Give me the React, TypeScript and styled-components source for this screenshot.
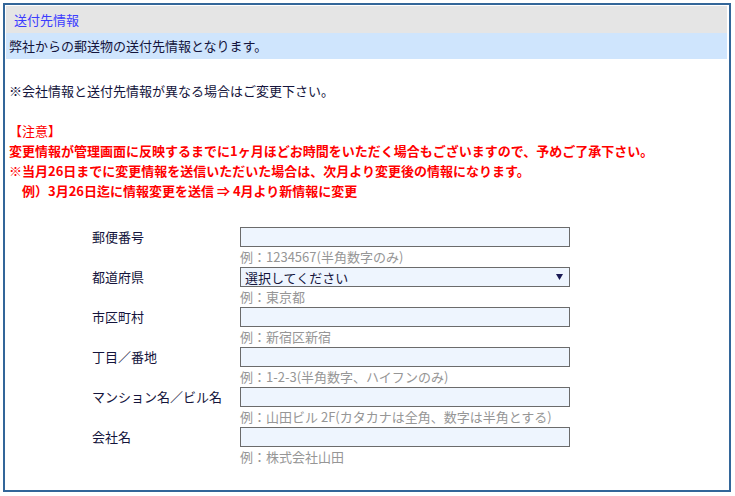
import React from "react";
import styled, { createGlobalStyle } from "styled-components";

const Global = createGlobalStyle`
  html, body { margin: 0; padding: 0; background: #ffffff; }
  body {
    padding: 3px;
    font-family: "Noto Sans CJK JP", "Noto Sans", sans-serif;
    font-size: 13px;
  }
  * { box-sizing: border-box; }
`;

const Panel = styled.section`
  width: 728px;
  border: 2px solid #336699;
  padding: 1px 2px 23px 1px;
  background: #ffffff;
`;

const Title = styled.h2`
  margin: 0;
  height: 27px;
  padding-left: 8px;
  background: #e5e5e5;
  color: #3c3cff;
  font-size: 13px;
  font-weight: normal;
  line-height: 27px;
`;

const Lead = styled.p`
  margin: 0;
  height: 26px;
  padding-left: 3px;
  background: #cfe5fd;
  color: #14143c;
  font-size: 13px;
  line-height: 26px;
`;

const Notes = styled.div`
  padding: 22px 0 0 3px;
  line-height: 20px;
  font-size: 13px;
`;

const NoteLine = styled.p`
  margin: 0;
  color: #14143c;
`;

const Warning = styled.div`
  margin-top: 20px;
  color: #ff0000;
`;

const WarnLine = styled.p<{ $bold?: boolean }>`
  margin: 0;
  font-weight: ${(p) => (p.$bold ? "bold" : "normal")};
  white-space: pre;
`;

const Form = styled.div`
  margin: 26px 0 0 86px;
  display: grid;
  grid-template-columns: 148px 330px;
  grid-auto-rows: 40px;
`;

const Label = styled.label`
  color: #14143c;
  font-size: 13px;
  line-height: 20px;
`;

const Field = styled.div`
  display: flex;
  flex-direction: column;
`;

const TextInput = styled.input`
  width: 330px;
  height: 20px;
  margin: 0;
  padding: 0 4px;
  border: 1px solid #6b6b6b;
  border-radius: 0;
  background: #eef5fe;
  font-family: inherit;
  font-size: 13px;
  outline: none;
`;

const SelectWrap = styled.div`
  position: relative;
  width: 330px;
  height: 20px;
`;

const Select = styled.select`
  appearance: none;
  -webkit-appearance: none;
  width: 330px;
  height: 20px;
  margin: 0;
  padding: 2px 0 0 4px;
  border: 1px solid #6b6b6b;
  border-radius: 0;
  background: #eef5fe;
  color: #14143c;
  font-family: inherit;
  font-size: 13px;
  line-height: 16px;
  outline: none;
`;

const Arrow = styled.svg`
  position: absolute;
  right: 7px;
  top: 7px;
  pointer-events: none;
`;

const Hint = styled.span`
  color: #969696;
  font-size: 13px;
  line-height: 20px;
  white-space: nowrap;
`;

type Row = { label: string; hint: string; select?: boolean };

const rows: Row[] = [
  { label: "郵便番号", hint: "例：1234567(半角数字のみ)" },
  { label: "都道府県", hint: "例：東京都", select: true },
  { label: "市区町村", hint: "例：新宿区新宿" },
  { label: "丁目／番地", hint: "例：1-2-3(半角数字、ハイフンのみ)" },
  { label: "マンション名／ビル名", hint: "例：山田ビル 2F(カタカナは全角、数字は半角とする)" },
  { label: "会社名", hint: "例：株式会社山田" },
];

export default function App() {
  return (
    <>
      <Global />
      <Panel>
        <Title>送付先情報</Title>
        <Lead>弊社からの郵送物の送付先情報となります。</Lead>
        <Notes>
          <NoteLine>※会社情報と送付先情報が異なる場合はご変更下さい。</NoteLine>
          <Warning>
            <WarnLine>【注意】</WarnLine>
            <WarnLine $bold>
              変更情報が管理画面に反映するまでに1ヶ月ほどお時間をいただく場合もございますので、予めご了承下さい。
            </WarnLine>
            <WarnLine $bold>
              ※当月26日までに変更情報を送信いただいた場合は、次月より変更後の情報になります。
            </WarnLine>
            <WarnLine $bold>{"　例）3月26日迄に情報変更を送信 ⇒ 4月より新情報に変更"}</WarnLine>
          </Warning>
        </Notes>
        <Form>
          {rows.map((r) => (
            <React.Fragment key={r.label}>
              <Label>{r.label}</Label>
              <Field>
                {r.select ? (
                  <SelectWrap>
                    <Select defaultValue="">
                      <option value="">選択してください</option>
                    </Select>
                    <Arrow width="7" height="6" viewBox="0 0 7 6">
                      <path d="M0 0H7L3.5 6Z" fill="#1a1a55" />
                    </Arrow>
                  </SelectWrap>
                ) : (
                  <TextInput type="text" />
                )}
                <Hint>{r.hint}</Hint>
              </Field>
            </React.Fragment>
          ))}
        </Form>
      </Panel>
    </>
  );
}
